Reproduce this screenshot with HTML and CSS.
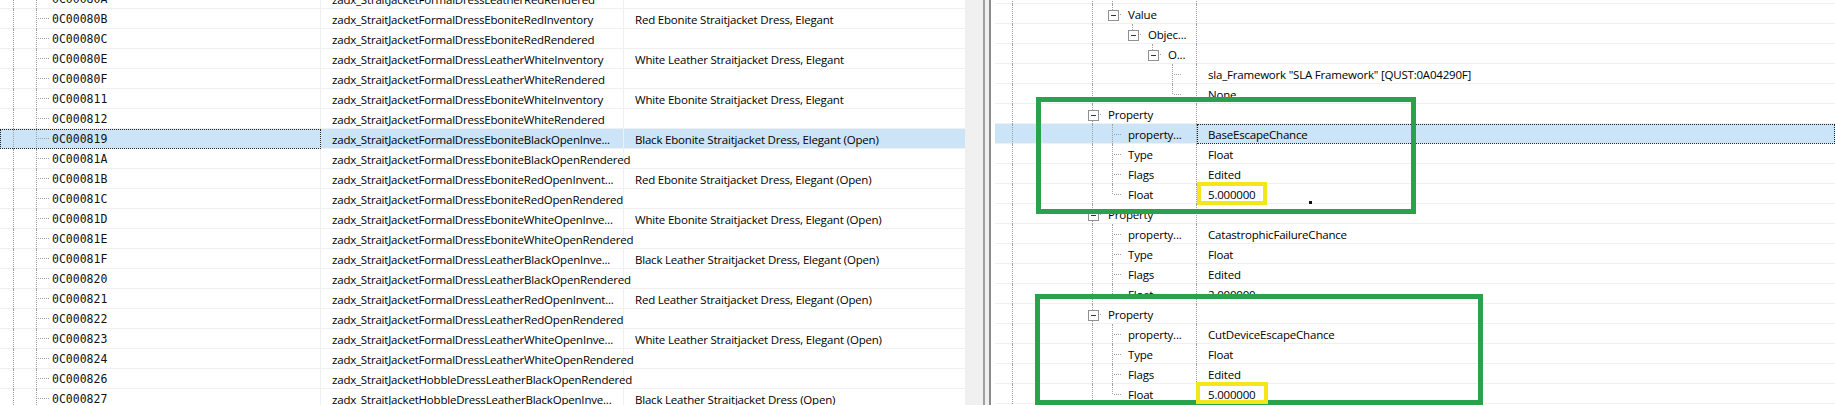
FILE: index.html
```html
<!DOCTYPE html>
<html lang="en">
<head>
    <meta charset="UTF-8">
    <title>Records</title>
    <link rel="stylesheet" href="styles.css">
</head>
<body>

<div class="app">

    <!-- record list: FormID / EditorID / Name -->
    <div class="records">
        <div class="rows">
            <div class="rec"><div class="fid"><i class="tee"></i>0C00080A</div><div class="edid">zadx_StraitJacketFormalDressLeatherRedRendered</div><div class="full"></div></div>
            <div class="rec"><div class="fid"><i class="tee"></i>0C00080B</div><div class="edid">zadx_StraitJacketFormalDressEboniteRedInventory</div><div class="full">Red Ebonite Straitjacket Dress, Elegant</div></div>
            <div class="rec"><div class="fid"><i class="tee"></i>0C00080C</div><div class="edid">zadx_StraitJacketFormalDressEboniteRedRendered</div><div class="full"></div></div>
            <div class="rec"><div class="fid"><i class="tee"></i>0C00080E</div><div class="edid">zadx_StraitJacketFormalDressLeatherWhiteInventory</div><div class="full">White Leather Straitjacket Dress, Elegant</div></div>
            <div class="rec"><div class="fid"><i class="tee"></i>0C00080F</div><div class="edid">zadx_StraitJacketFormalDressLeatherWhiteRendered</div><div class="full"></div></div>
            <div class="rec"><div class="fid"><i class="tee"></i>0C000811</div><div class="edid">zadx_StraitJacketFormalDressEboniteWhiteInventory</div><div class="full">White Ebonite Straitjacket Dress, Elegant</div></div>
            <div class="rec"><div class="fid"><i class="tee"></i>0C000812</div><div class="edid">zadx_StraitJacketFormalDressEboniteWhiteRendered</div><div class="full"></div></div>
            <div class="rec sel"><div class="fid"><i class="tee"></i>0C000819</div><div class="edid">zadx_StraitJacketFormalDressEboniteBlackOpenInve...</div><div class="full">Black Ebonite Straitjacket Dress, Elegant (Open)</div></div>
            <div class="rec"><div class="fid"><i class="tee"></i>0C00081A</div><div class="edid">zadx_StraitJacketFormalDressEboniteBlackOpenRendered</div><div class="full"></div></div>
            <div class="rec"><div class="fid"><i class="tee"></i>0C00081B</div><div class="edid">zadx_StraitJacketFormalDressEboniteRedOpenInvent...</div><div class="full">Red Ebonite Straitjacket Dress, Elegant (Open)</div></div>
            <div class="rec"><div class="fid"><i class="tee"></i>0C00081C</div><div class="edid">zadx_StraitJacketFormalDressEboniteRedOpenRendered</div><div class="full"></div></div>
            <div class="rec"><div class="fid"><i class="tee"></i>0C00081D</div><div class="edid">zadx_StraitJacketFormalDressEboniteWhiteOpenInve...</div><div class="full">White Ebonite Straitjacket Dress, Elegant (Open)</div></div>
            <div class="rec"><div class="fid"><i class="tee"></i>0C00081E</div><div class="edid">zadx_StraitJacketFormalDressEboniteWhiteOpenRendered</div><div class="full"></div></div>
            <div class="rec"><div class="fid"><i class="tee"></i>0C00081F</div><div class="edid">zadx_StraitJacketFormalDressLeatherBlackOpenInve...</div><div class="full">Black Leather Straitjacket Dress, Elegant (Open)</div></div>
            <div class="rec"><div class="fid"><i class="tee"></i>0C000820</div><div class="edid">zadx_StraitJacketFormalDressLeatherBlackOpenRendered</div><div class="full"></div></div>
            <div class="rec"><div class="fid"><i class="tee"></i>0C000821</div><div class="edid">zadx_StraitJacketFormalDressLeatherRedOpenInvent...</div><div class="full">Red Leather Straitjacket Dress, Elegant (Open)</div></div>
            <div class="rec"><div class="fid"><i class="tee"></i>0C000822</div><div class="edid">zadx_StraitJacketFormalDressLeatherRedOpenRendered</div><div class="full"></div></div>
            <div class="rec"><div class="fid"><i class="tee"></i>0C000823</div><div class="edid">zadx_StraitJacketFormalDressLeatherWhiteOpenInve...</div><div class="full">White Leather Straitjacket Dress, Elegant (Open)</div></div>
            <div class="rec"><div class="fid"><i class="tee"></i>0C000824</div><div class="edid">zadx_StraitJacketFormalDressLeatherWhiteOpenRendered</div><div class="full"></div></div>
            <div class="rec"><div class="fid"><i class="tee"></i>0C000826</div><div class="edid">zadx_StraitJacketHobbleDressLeatherBlackOpenRendered</div><div class="full"></div></div>
            <div class="rec"><div class="fid"><i class="tee"></i>0C000827</div><div class="edid">zadx_StraitJacketHobbleDressLeatherBlackOpenInve...</div><div class="full">Black Leather Straitjacket Dress (Open)</div></div>
        </div>
    </div>

    <div class="vscroll"></div>
    <div class="splitter"></div>

    <!-- record view: element tree with values -->
    <div class="view">
        <div class="rows">
            <div class="node"><div class="label"><i class="s v"></i><i class="s"></i><i class="s"></i><i class="s"></i><i class="s v"></i><i class="s v"></i></div><div class="val"></div></div>
            <div class="node"><div class="label"><i class="s v"></i><i class="s"></i><i class="s"></i><i class="s"></i><i class="s v"></i><i class="s x"></i><span>Value</span></div><div class="val"></div></div>
            <div class="node"><div class="label"><i class="s v"></i><i class="s"></i><i class="s"></i><i class="s"></i><i class="s v"></i><i class="s"></i><i class="s x"></i><span>Objec...</span></div><div class="val"></div></div>
            <div class="node"><div class="label"><i class="s v"></i><i class="s"></i><i class="s"></i><i class="s"></i><i class="s v"></i><i class="s"></i><i class="s"></i><i class="s x"></i><span>O...</span></div><div class="val"></div></div>
            <div class="node"><div class="label"><i class="s v"></i><i class="s"></i><i class="s"></i><i class="s"></i><i class="s v"></i><i class="s"></i><i class="s"></i><i class="s"></i><i class="s t"></i></div><div class="val">sla_Framework "SLA Framework" [QUST:0A04290F]</div></div>
            <div class="node"><div class="label"><i class="s v"></i><i class="s"></i><i class="s"></i><i class="s"></i><i class="s v"></i><i class="s"></i><i class="s"></i><i class="s"></i><i class="s l"></i></div><div class="val">None</div></div>

            <div class="node"><div class="label"><i class="s v"></i><i class="s"></i><i class="s"></i><i class="s"></i><i class="s xm"></i><span>Property</span></div><div class="val"></div></div>
            <div class="node sel"><div class="label"><i class="s v"></i><i class="s"></i><i class="s"></i><i class="s"></i><i class="s v"></i><i class="s t"></i><span>property...</span></div><div class="val">BaseEscapeChance</div></div>
            <div class="node"><div class="label"><i class="s v"></i><i class="s"></i><i class="s"></i><i class="s"></i><i class="s v"></i><i class="s t"></i><span>Type</span></div><div class="val">Float</div></div>
            <div class="node"><div class="label"><i class="s v"></i><i class="s"></i><i class="s"></i><i class="s"></i><i class="s v"></i><i class="s t"></i><span>Flags</span></div><div class="val">Edited</div></div>
            <div class="node"><div class="label"><i class="s v"></i><i class="s"></i><i class="s"></i><i class="s"></i><i class="s v"></i><i class="s l"></i><span>Float</span></div><div class="val">5.000000</div></div>

            <div class="node"><div class="label"><i class="s v"></i><i class="s"></i><i class="s"></i><i class="s"></i><i class="s xm"></i><span>Property</span></div><div class="val"></div></div>
            <div class="node"><div class="label"><i class="s v"></i><i class="s"></i><i class="s"></i><i class="s"></i><i class="s v"></i><i class="s t"></i><span>property...</span></div><div class="val">CatastrophicFailureChance</div></div>
            <div class="node"><div class="label"><i class="s v"></i><i class="s"></i><i class="s"></i><i class="s"></i><i class="s v"></i><i class="s t"></i><span>Type</span></div><div class="val">Float</div></div>
            <div class="node"><div class="label"><i class="s v"></i><i class="s"></i><i class="s"></i><i class="s"></i><i class="s v"></i><i class="s t"></i><span>Flags</span></div><div class="val">Edited</div></div>
            <div class="node"><div class="label"><i class="s v"></i><i class="s"></i><i class="s"></i><i class="s"></i><i class="s v"></i><i class="s l"></i><span>Float</span></div><div class="val">2.000000</div></div>

            <div class="node"><div class="label"><i class="s v"></i><i class="s"></i><i class="s"></i><i class="s"></i><i class="s xm"></i><span>Property</span></div><div class="val"></div></div>
            <div class="node"><div class="label"><i class="s v"></i><i class="s"></i><i class="s"></i><i class="s"></i><i class="s v"></i><i class="s t"></i><span>property...</span></div><div class="val">CutDeviceEscapeChance</div></div>
            <div class="node"><div class="label"><i class="s v"></i><i class="s"></i><i class="s"></i><i class="s"></i><i class="s v"></i><i class="s t"></i><span>Type</span></div><div class="val">Float</div></div>
            <div class="node"><div class="label"><i class="s v"></i><i class="s"></i><i class="s"></i><i class="s"></i><i class="s v"></i><i class="s t"></i><span>Flags</span></div><div class="val">Edited</div></div>
            <div class="node"><div class="label"><i class="s v"></i><i class="s"></i><i class="s"></i><i class="s"></i><i class="s v"></i><i class="s l"></i><span>Float</span></div><div class="val">5.000000</div></div>
        </div>

        <!-- highlight marks drawn over the tree -->
        <div class="mark green g1"></div>
        <div class="mark green g2"></div>
        <div class="mark yellow y1"></div>
        <div class="mark yellow y2"></div>
        <div class="mark dot"></div>
    </div>

</div>

</body>
</html>
```

FILE: styles.css
```css
* {
    box-sizing: border-box;
}
html, body {
    margin: 0;
    height: 100%;
}
body {
    background-color: #fff;
    color: #000;
    font-family: "Open Sans", sans-serif;
    font-size: 11.5px;
    letter-spacing: -0.2px;
    overflow: hidden;
}
.app {
    display: flex;
    height: 405px;
}

/* left list */
.records {
    width: 966px;
    flex: none;
    overflow: hidden;
}
.records .rows {
    margin-top: -11px;
}
.rec {
    display: flex;
    height: 20px;
    white-space: nowrap;
    background-image: linear-gradient(#f0f0f0, #f0f0f0);
    background-size: 100% 1px;
    background-position: left bottom;
    background-repeat: no-repeat;
}
.rec.sel {
    background-color: #cce4f7;
}
.fid {
    width: 321px;
    flex: none;
    display: flex;
    align-items: center;
    border-right: 1px solid #f0f0f0;
    font-family: "DejaVu Sans Mono", monospace;
    font-size: 11.5px;
    letter-spacing: 0;
    color: #111;
}
.fid::before {
    content: "";
    align-self: stretch;
    width: 22px;
    margin-left: 13px;
    border-left: 1px dotted #a0a0a0;
    flex: none;
}
.tee {
    align-self: stretch;
    width: 16px;
    flex: none;
    border-left: 1px dotted #a0a0a0;
    background: repeating-linear-gradient(to right, #a0a0a0 0 1px, transparent 1px 2px) 1px 9px / 11px 1px no-repeat;
}
.rec.sel .fid {
    outline: 1px dotted #222;
    outline-offset: -1px;
}
.edid {
    width: 303px;
    flex: none;
    display: flex;
    align-items: center;
    padding-left: 11px;
    border-right: 1px solid #f0f0f0;
}
.full {
    flex: 1;
    display: flex;
    align-items: center;
    padding-left: 11px;
    border-right: 1px solid #f0f0f0;
}

.vscroll {
    width: 17px;
    flex: none;
    background-color: #f0f0f0;
}
.splitter {
    width: 8px;
    flex: none;
    background-color: #f0f0f0;
    border-left: 2px solid #a0a0a0;
    border-right: 2px solid #8a8a8a;
}

/* right tree */
.view {
    flex: 1;
    position: relative;
    overflow: hidden;
    margin-left: 4px;
}
.view .rows {
    margin-top: -16px;
}
.node {
    display: flex;
    height: 20px;
    white-space: nowrap;
    background-image: linear-gradient(#f0f0f0, #f0f0f0);
    background-size: 100% 1px;
    background-position: left bottom;
    background-repeat: no-repeat;
}
.node.sel {
    background-color: #cce4f7;
}
.label {
    width: 202px;
    flex: none;
    display: flex;
    align-items: center;
    padding-left: 7px;
    border-right: 1px dotted #a0a0a0;
    overflow: hidden;
}
.label span {
    margin-left: 6px;
}
.val {
    flex: 1;
    display: flex;
    align-items: center;
    padding-left: 11px;
}
.node.sel .val {
    outline: 1px dotted #222;
    outline-offset: -1px;
}

/* tree guide slots */
.s {
    width: 20px;
    flex: none;
    align-self: stretch;
    position: relative;
}
.v::before, .t::before, .l::before, .x::before, .xm::before {
    content: "";
    position: absolute;
    left: 10px;
    top: 0;
    bottom: 0;
    border-left: 1px dotted #a0a0a0;
}
.l::before {
    bottom: auto;
    height: 10px;
}
.x::before {
    bottom: auto;
    height: 6px;
}
.t, .l {
    background: repeating-linear-gradient(to right, #a0a0a0 0 1px, transparent 1px 2px) 12px 10px / 9px 1px no-repeat;
}
.x, .xm {
    background: repeating-linear-gradient(to right, #a0a0a0 0 1px, transparent 1px 2px) 16px 10px / 6px 1px no-repeat;
}
.x::after, .xm::after {
    content: "";
    position: absolute;
    left: 6px;
    top: 6px;
    width: 9px;
    height: 9px;
    border: 1px solid #909090;
    background: #fff linear-gradient(#333, #333) center / 5px 1px no-repeat;
}

/* highlight marks */
.mark {
    position: absolute;
}
.green {
    border: 5px solid #2aa24c;
}
.yellow {
    border: 4px solid #f3e61b;
}
.g1 {
    left: 41px;
    top: 97px;
    width: 380px;
    height: 117px;
}
.g2 {
    left: 40px;
    top: 294px;
    width: 448px;
    height: 111px;
}
.y1 {
    left: 202px;
    top: 182px;
    width: 70px;
    height: 23px;
}
.y2 {
    left: 201px;
    top: 382px;
    width: 72px;
    height: 22px;
}
.dot {
    left: 314px;
    top: 201px;
    width: 3px;
    height: 3px;
    background-color: #111;
}
```
